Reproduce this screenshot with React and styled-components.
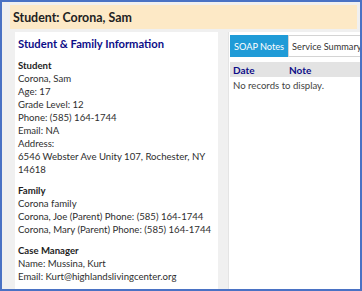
import styled, { createGlobalStyle } from "styled-components";

const GlobalStyle = createGlobalStyle`
  html, body {
    margin: 0;
    padding: 0;
    background: #ffffff;
  }
  * {
    box-sizing: border-box;
  }
`;

const Frame = styled.div`
  width: 362px;
  height: 291px;
  border: 2px solid #4a72c4;
  background: #f0f0f0;
  padding: 3px 3px 0 8px;
  display: flex;
  flex-direction: column;
  font-family: Lato, "Open Sans", sans-serif;
  color: #2e2e2e;
  overflow: hidden;
`;

const Header = styled.div`
  height: 24px;
  background: #fde9c6;
  display: flex;
  align-items: center;
  padding-left: 3px;
  font-size: 12.4px;
  font-weight: 700;
  color: #222222;
`;

const Body = styled.div`
  flex: 1;
  display: flex;
  margin-top: 3px;
  margin-left: 5px;
  min-height: 0;
`;

const InfoPanel = styled.div`
  width: 203px;
  flex-shrink: 0;
  background: #ffffff;
  padding: 4px 0 0 3px;
  font-size: 9.6px;
  line-height: 13px;
  overflow: hidden;
`;

const Gutter = styled.div`
  width: 11px;
  flex-shrink: 0;
  background: #f0f0f0;
  border-right: 1px solid #e4e4e4;
`;

const TitleHeading = styled.h2`
  margin: 0 0 7px;
  font-size: 11.2px;
  line-height: 16px;
  font-weight: 700;
  color: #0d0d88;
`;

const Section = styled.div`
  margin-bottom: 8px;
`;

const SectionTitle = styled.div`
  font-weight: 700;
  color: #1e1e1e;
`;

const Line = styled.div`
  white-space: nowrap;
`;

const Wrapped = styled.div``;

const NotesPanel = styled.div`
  flex: 1;
  background: #ffffff;
  padding: 3px 0 0 1px;
  display: flex;
  flex-direction: column;
`;

const Tabs = styled.div`
  display: flex;
  height: 22px;
`;

const Tab = styled.div`
  display: flex;
  align-items: center;
  padding: 0 3px;
  font-size: 9.2px;
  white-space: nowrap;
  background: ${({ $active }) => ($active ? "#1f9bd7" : "#ffffff")};
  color: ${({ $active }) => ($active ? "#ffffff" : "#333333")};
  border: 1px solid ${({ $active }) => ($active ? "#1f9bd7" : "#d4d4d4")};
`;

const GridHeader = styled.div`
  display: flex;
  margin-top: 5px;
  height: 15px;
  align-items: center;
  background: #e3e3e3;
  font-size: 10px;
  font-weight: 700;
  color: #0d0d88;
  padding-left: 3px;
`;

const Col = styled.div`
  width: ${({ $w }) => $w}px;
`;

const Empty = styled.div`
  padding: 3px 3px;
  font-size: 9.6px;
  color: #444444;
`;

export default function App() {
  return (
    <>
      <GlobalStyle />
      <Frame>
        <Header>Student: Corona, Sam</Header>
        <Body>
          <InfoPanel>
            <TitleHeading>Student &amp; Family Information</TitleHeading>
            <Section>
              <SectionTitle>Student</SectionTitle>
              <Line>Corona, Sam</Line>
              <Line>Age: 17</Line>
              <Line>Grade Level: 12</Line>
              <Line>Phone: (585) 164-1744</Line>
              <Line>Email: NA</Line>
              <Line>Address:</Line>
              <Wrapped>6546 Webster Ave Unity 107, Rochester, NY 14618</Wrapped>
            </Section>
            <Section>
              <SectionTitle>Family</SectionTitle>
              <Line>Corona family</Line>
              <Line>Corona, Joe (Parent) Phone: (585) 164-1744</Line>
              <Line>Corona, Mary (Parent) Phone: (585) 164-1744</Line>
            </Section>
            <Section>
              <SectionTitle>Case Manager</SectionTitle>
              <Line>Name: Mussina, Kurt</Line>
              <Line>Email: Kurt@highlandslivingcenter.org</Line>
            </Section>
          </InfoPanel>
          <Gutter />
          <NotesPanel>
            <Tabs>
              <Tab $active>SOAP Notes</Tab>
              <Tab>Service Summary</Tab>
            </Tabs>
            <GridHeader>
              <Col $w={56}>Date</Col>
              <Col $w={60}>Note</Col>
            </GridHeader>
            <Empty>No records to display.</Empty>
          </NotesPanel>
        </Body>
      </Frame>
    </>
  );
}
